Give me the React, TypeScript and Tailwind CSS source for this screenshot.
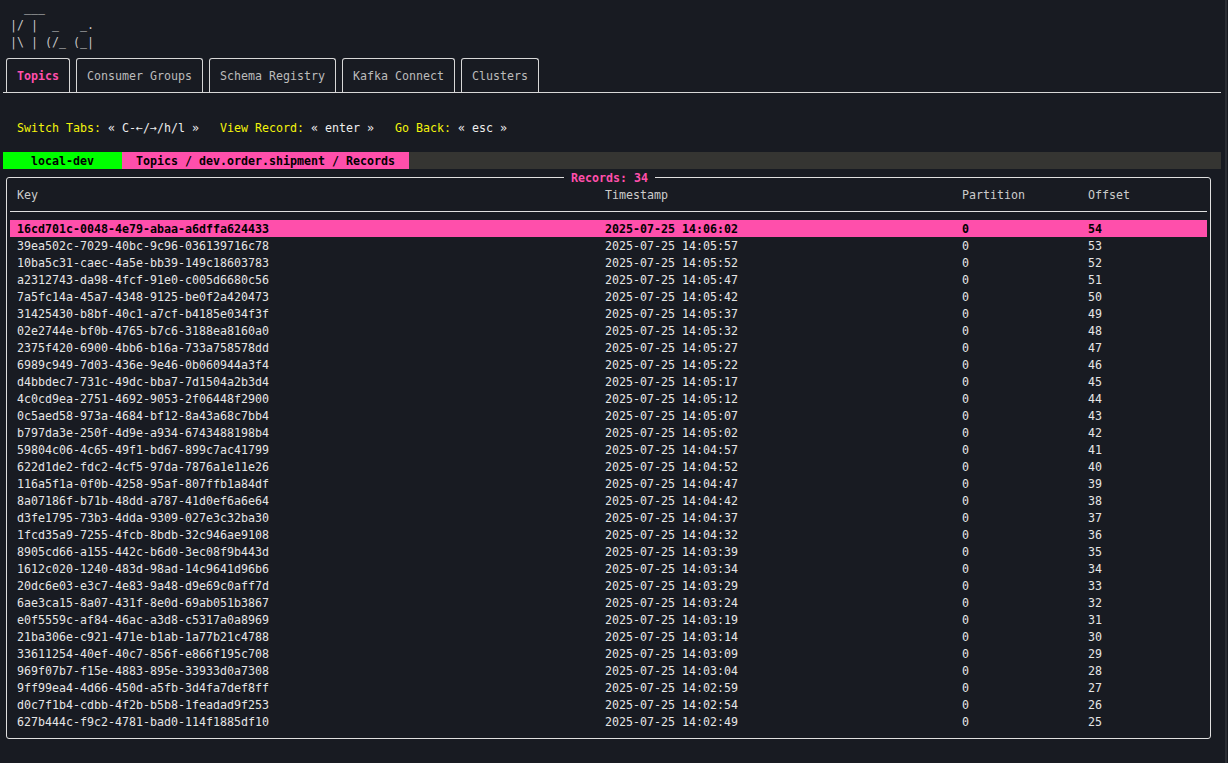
import React from "react";

const records: [string, string, string][] = [
  ["16cd701c-0048-4e79-abaa-a6dffa624433", "2025-07-25 14:06:02", "54"],
  ["39ea502c-7029-40bc-9c96-036139716c78", "2025-07-25 14:05:57", "53"],
  ["10ba5c31-caec-4a5e-bb39-149c18603783", "2025-07-25 14:05:52", "52"],
  ["a2312743-da98-4fcf-91e0-c005d6680c56", "2025-07-25 14:05:47", "51"],
  ["7a5fc14a-45a7-4348-9125-be0f2a420473", "2025-07-25 14:05:42", "50"],
  ["31425430-b8bf-40c1-a7cf-b4185e034f3f", "2025-07-25 14:05:37", "49"],
  ["02e2744e-bf0b-4765-b7c6-3188ea8160a0", "2025-07-25 14:05:32", "48"],
  ["2375f420-6900-4bb6-b16a-733a758578dd", "2025-07-25 14:05:27", "47"],
  ["6989c949-7d03-436e-9e46-0b060944a3f4", "2025-07-25 14:05:22", "46"],
  ["d4bbdec7-731c-49dc-bba7-7d1504a2b3d4", "2025-07-25 14:05:17", "45"],
  ["4c0cd9ea-2751-4692-9053-2f06448f2900", "2025-07-25 14:05:12", "44"],
  ["0c5aed58-973a-4684-bf12-8a43a68c7bb4", "2025-07-25 14:05:07", "43"],
  ["b797da3e-250f-4d9e-a934-6743488198b4", "2025-07-25 14:05:02", "42"],
  ["59804c06-4c65-49f1-bd67-899c7ac41799", "2025-07-25 14:04:57", "41"],
  ["622d1de2-fdc2-4cf5-97da-7876a1e11e26", "2025-07-25 14:04:52", "40"],
  ["116a5f1a-0f0b-4258-95af-807ffb1a84df", "2025-07-25 14:04:47", "39"],
  ["8a07186f-b71b-48dd-a787-41d0ef6a6e64", "2025-07-25 14:04:42", "38"],
  ["d3fe1795-73b3-4dda-9309-027e3c32ba30", "2025-07-25 14:04:37", "37"],
  ["1fcd35a9-7255-4fcb-8bdb-32c946ae9108", "2025-07-25 14:04:32", "36"],
  ["8905cd66-a155-442c-b6d0-3ec08f9b443d", "2025-07-25 14:03:39", "35"],
  ["1612c020-1240-483d-98ad-14c9641d96b6", "2025-07-25 14:03:34", "34"],
  ["20dc6e03-e3c7-4e83-9a48-d9e69c0aff7d", "2025-07-25 14:03:29", "33"],
  ["6ae3ca15-8a07-431f-8e0d-69ab051b3867", "2025-07-25 14:03:24", "32"],
  ["e0f5559c-af84-46ac-a3d8-c5317a0a8969", "2025-07-25 14:03:19", "31"],
  ["21ba306e-c921-471e-b1ab-1a77b21c4788", "2025-07-25 14:03:14", "30"],
  ["33611254-40ef-40c7-856f-e866f195c708", "2025-07-25 14:03:09", "29"],
  ["969f07b7-f15e-4883-895e-33933d0a7308", "2025-07-25 14:03:04", "28"],
  ["9ff99ea4-4d66-450d-a5fb-3d4fa7def8ff", "2025-07-25 14:02:59", "27"],
  ["d0c7f1b4-cdbb-4f2b-b5b8-1feadad9f253", "2025-07-25 14:02:54", "26"],
  ["627b444c-f9c2-4781-bad0-114f1885df10", "2025-07-25 14:02:49", "25"],
];

// tab box width = (label + 3 cells) * 7px + 1px border
const tabs = [
  { label: "Topics", w: "w-[64px]", active: true },
  { label: "Consumer Groups", w: "w-[127px]" },
  { label: "Schema Registry", w: "w-[127px]" },
  { label: "Kafka Connect", w: "w-[113px]" },
  { label: "Clusters", w: "w-[78px]" },
];

const logo = ["  ___", "|/ |  _   _.", "|\\ | (/_ (_|"];

function Key({ name, value }: { name: string; value: string }) {
  return (
    <span className="whitespace-pre">
      <span className="text-[#f4f40c]">{name}</span>
      <span className="text-[#eeeeee]">{" « " + value + " »"}</span>
    </span>
  );
}

export default function App() {
  return (
    <div
      className="w-[1228px] h-[763px] overflow-hidden bg-[#181b22] flex text-[11.63px] leading-[17px] text-[#dcdcdc]"
      style={{ fontFamily: '"DejaVu Sans Mono", "Liberation Mono", monospace' }}
    >
      <div className="w-[1221px] pl-[3px] mt-[-1px] flex flex-col">
        {/* logo */}
        <div className="pl-[7px] text-[#c8c8c8] whitespace-pre">
          {logo.map((l, i) => (
            <div key={i} className="h-[17px] pt-[1px]">{l}</div>
          ))}
        </div>

        {/* tabs */}
        <div className="mt-[8px] flex flex-col">
          <div className="flex gap-[6px] pl-[3px]">
            {tabs.map((t) => (
              <div
                key={t.label}
                className={`${t.w} h-[34px] pt-[9px] pl-[10px] border-t border-x border-[#d8d8d8] rounded-t-[3px] whitespace-pre`}
              >
                <span className={t.active ? "font-bold text-[#ff4fab]" : "text-[#bcbcbc]"}>{t.label}</span>
              </div>
            ))}
          </div>
          <div className="h-px bg-[#d8d8d8]" />
        </div>

        {/* key bindings */}
        <div className="mt-[26px] h-[17px] pt-[1px] pl-[14px] flex gap-[21px]">
          <Key name="Switch Tabs:" value="C-←/→/h/l" />
          <Key name="View Record:" value="enter" />
          <Key name="Go Back:" value="esc" />
        </div>

        {/* breadcrumb bar */}
        <div className="mt-[16px] h-[17px] flex font-bold bg-[#353532] text-black">
          <div className="w-[119px] pt-[1px] bg-[#00ff00] text-center">local-dev</div>
          <div className="w-[287px] pt-[1px] bg-[#ff4fab] text-center">Topics / dev.order.shipment / Records</div>
        </div>

        {/* records box */}
        <div className="relative mt-[8px] ml-[3px] w-[1205px] border border-[#e0e0e0] rounded-[3px] px-[3px] pt-[8px] pb-[8px]">
          <div className="absolute -top-[8px] left-[557px] px-[7px] bg-[#181b22] font-bold text-[#ff4fab] whitespace-pre">
            Records: 34
          </div>

          <div className="grid grid-cols-[588px_357px_126px_1fr] pl-[7px] h-[17px] pt-[1px] text-[#cccccc]">
            <span>Key</span>
            <span>Timestamp</span>
            <span>Partition</span>
            <span>Offset</span>
          </div>
          <div className="h-[17px] flex items-center">
            <div className="h-px w-full bg-[#e0e0e0]" />
          </div>

          {records.map(([key, ts, off], i) => (
            <div
              key={key}
              className={`grid grid-cols-[588px_357px_126px_1fr] pl-[7px] h-[17px] pt-[1px] whitespace-pre ${
                i === 0 ? "bg-[#ff4fab] text-black font-bold" : "text-[#e6e6e6]"
              }`}
            >
              <span>{key}</span>
              <span>{ts}</span>
              <span>0</span>
              <span>{off}</span>
            </div>
          ))}
        </div>
      </div>

      {/* window edge */}
      <div className="flex-1 pl-[4px]">
        <div className="w-[2px] h-full bg-[#2b2e34]" />
      </div>
    </div>
  );
}
